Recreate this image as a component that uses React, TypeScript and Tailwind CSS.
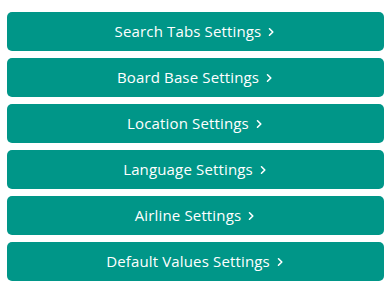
import React from 'react';

const items = [
  'Search Tabs Settings',
  'Board Base Settings',
  'Location Settings',
  'Language Settings',
  'Airline Settings',
  'Default Values Settings',
];

function Chevron() {
  return (
    <svg width="10" height="10" viewBox="0 0 10 10" fill="none" className="ml-[5px]">
      <path d="M3.5 1.8 L6.8 5 L3.5 8.2" stroke="white" strokeWidth="1.6" strokeLinecap="round" strokeLinejoin="round" />
    </svg>
  );
}

export default function App() {
  return (
    <div className="w-[387px] h-[289px] bg-white pt-[12px] pl-[7px] pr-[3px] flex flex-col gap-[7px]" style={{ fontFamily: '"Open Sans", sans-serif' }}>
      {items.map((label) => (
        <button
          key={label}
          className="h-[39px] w-full rounded-[5px] bg-[#009688] text-white text-[15px] tracking-[0.15px] flex items-center justify-center"
        >
          <span>{label}</span>
          <Chevron />
        </button>
      ))}
    </div>
  );
}
